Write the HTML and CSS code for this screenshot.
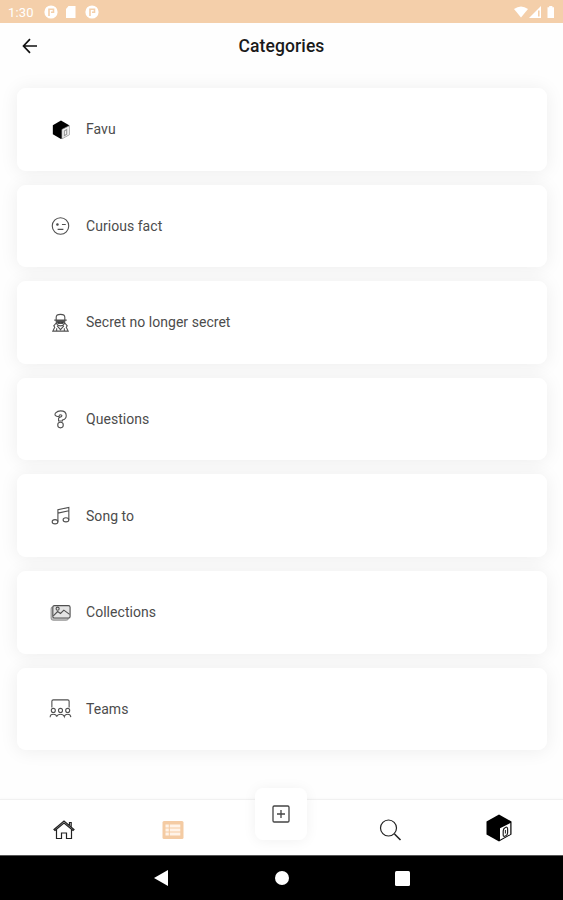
FILE: index.html
```html
<!DOCTYPE html>
<html lang="en">
<head>
<meta charset="utf-8">
<title>Categories</title>
<link rel="stylesheet" href="styles.css">
</head>
<body>
<div class="status">
  <span class="time">1:30</span>
  <svg class="status-left" width="56" height="14" viewBox="0 0 56 14">
    <g fill="#fff"><circle cx="7" cy="7" r="6.600"/><path d="M24.500 1h7v12H22V4z"/><circle cx="48" cy="7" r="6.600"/></g>
    <g fill="none" stroke="#f4cfaa" stroke-width="1.600"><path d="M5 11V4.200h4.500v3H7M46 11V4.200h4.500v3H48"/></g>
  </svg>
  <svg class="status-right" width="42" height="14" viewBox="0 0 42 14" fill="#fff">
    <path d="M0 4Q7-1.200 14 4L7 12.500z"/><path d="M15 13 27 1v12z"/><path d="M24 5.500h1.600v6H24z" fill="#f4cfaa"/><path d="M33.500 2.200h1.700V1h3.200v1.200H40V13h-6.500z"/>
  </svg>
</div>
<header class="header">
  <svg class="back" width="16" height="16" viewBox="0 0 16 16" fill="none" stroke="#111" stroke-width="1.700"><path d="M8 1.200 1.500 8 8 14.800M1.500 8H15"/></svg>
  <h1>Categories</h1>
</header>
<main class="list">
  <div class="card"><svg class="icon" viewBox="0 0 24 24"><path d="m12.500 2.500 8.500 5v10l-8.500 4.500-8.500-5v-9.500z" fill="#000" stroke="none"/><path d="m13.500 12 7.800-4v9.500l-7.800 4.300z" fill="#f4f4f4" stroke="#999" stroke-width=".7"/><path d="m16 13.500 2.500-1.500v5L16 18.500z" fill="none" stroke="#999"/></svg><span>Favu</span></div>
  <div class="card"><svg class="icon" viewBox="0 0 24 24"><circle cx="12" cy="12.500" r="8.600"/><path d="M13.500 11h4M9 16h6"/><circle cx="8.800" cy="11" r=".8" fill="#333"/></svg><span>Curious fact</span></div>
  <div class="card"><svg class="icon" viewBox="0 0 24 24"><path d="M7.500 9V6.500q0-3 4.500-3t4.500 3V9M5.500 9.500h13M7.500 10.500q0 5 4.500 5t4.500-5zM7.500 12.500l-2.500 3 1 1.500-2 4h16L18 17l1-1.500-2.500-3M8.500 15.500l3.500 4 3.500-4M8 18v2.500m8-2.500v2.500"/><path d="M8.500 11h3v2h-2zm4 0h3l-1 2h-2z" fill="#333"/></svg><span>Secret no longer secret</span></div>
  <div class="card"><svg class="icon" viewBox="0 0 24 24"><path d="M7 8q-1.500-1 0-3 2-2 5-2 6 0 6 5 0 3.500-4 4.500v1h-4V11q0-1 1.500-1.500 2-.5 2-1.500T12 7q-1.500 0-1.500 1.500-2 1-3.500-.5z"/><circle cx="12" cy="17.800" r="2.900"/></svg><span>Questions</span></div>
  <div class="card"><svg class="icon" viewBox="0 0 24 24"><ellipse cx="6.300" cy="18.500" rx="3" ry="2.200"/><ellipse cx="17.700" cy="16.500" rx="3" ry="2.200"/><path d="M9.300 18.500V6L20.700 3.500v13M9.300 9.500l11.400-2.500"/></svg><span>Song to</span></div>
  <div class="card"><svg class="icon" viewBox="0 0 24 24"><rect x="2.200" y="6" width="18" height="14" rx="2.500" fill="#ccc" stroke="#999"/><rect x="4" y="4.800" width="18" height="13" rx="1.700" fill="#e4e4e4"/><path d="m4.500 15.500 4.500-4.500 3 2 3.500-3.500 6 4.500"/><circle cx="9" cy="8" r="1.600"/></svg><span>Collections</span></div>
  <div class="card"><svg class="icon" viewBox="0 0 24 24"><path d="M3 11V4.500q0-1.500 1.500-1.500h15Q21 3 21 4.500V11"/><circle cx="4.500" cy="14" r="2.100"/><circle cx="12" cy="14" r="2.100"/><circle cx="19.500" cy="14" r="2.100"/><path d="M1.200 21q0-3 3.300-3t3.500 2.500q1-2.500 4-2.500t4 2.500q.5-2.500 3.500-2.500t3.300 3"/></svg><span>Teams</span></div>
</main>
<nav class="tabs">
  <div class="tab"><svg width="24" height="24" viewBox="0 0 24 24" fill="none" stroke="#222" stroke-width="1.200"><path d="M2 11.500 12 3l10 8.500-1 1-9-7.500-9 7.500zM4.500 11.500V20.500h5V15h5v5.500h5v-9M17.500 7V4.500h1.700V9"/></svg></div>
  <div class="tab"><svg width="24" height="24" viewBox="0 0 24 24"><rect x="1.500" y="3" width="21" height="18" rx="1.500" fill="#f4cba3"/><path d="M4.500 6.500h3.300v3H4.500zm0 4h3.300v3H4.500zm0 4h3.300v3H4.500zm4.300-8h10.500v3H8.800zm0 4h10.500v3H8.800zm0 4h10.500v3H8.800z" fill="#fff3e8"/></svg></div>
  <div class="tab"><div class="add"><svg width="24" height="24" viewBox="0 0 24 24" fill="none" stroke="#444" stroke-width="1.300"><rect x="4" y="4" width="16" height="16" rx="1.200"/><path d="M12 8v8m-4-4h8"/></svg></div></div>
  <div class="tab"><svg width="24" height="24" viewBox="0 0 24 24" fill="none" stroke="#222" stroke-width="1.200"><circle cx="10.500" cy="10" r="8"/><path d="m16.500 16 6 6" stroke-width="1.600"/></svg></div>
  <div class="tab"><svg class="cube" width="28" height="30" viewBox="0 0 28 30"><path d="m14 1.500 12.500 7v13L14 28.500 1.500 21.500V8.500z"/><path d="m15 15.300 10.300-5.300v11.200L15 26.800z" fill="#fff"/><path d="M18.200 18q0-2.500 2.200-3.500t2.200 1.500v4q0 2-2.200 3t-2.200-1z" fill="#fff" stroke="#222" stroke-width="1.200"/><path d="M20.400 17v3.500" stroke="#222"/></svg></div>
</nav>
<footer class="system">
  <div class="key"><svg width="14" height="16" viewBox="0 0 14 16"><path d="M0 8 14 0v16z" fill="#fff"/></svg></div>
  <div class="key"><span class="home"></span></div>
  <div class="key"><span class="recent"></span></div>
</footer>
</body>
</html>
```
FILE: styles.css
```css
* { box-sizing: border-box; }
body {
  margin: 0;
  width: 563px;
  height: 900px;
  display: flex;
  flex-direction: column;
  overflow: hidden;
  background: #fefefe;
  font-family: Roboto, sans-serif;
}
svg { display: block; flex: none; }
.status {
  height: 23px;
  flex: none;
  display: flex;
  align-items: center;
  padding: 1px 7px 0 8px;
  background: #f4cfaa;
  color: #fff;
}
.time { width: 36px; font-size: 13px; letter-spacing: .2px; }
.status-right { margin-left: auto; }
.header {
  height: 46px;
  flex: none;
  display: grid;
  grid-template-columns: 1fr auto 1fr;
  align-items: center;
  padding: 0 22px;
}
.header h1 {
  margin: 0;
  font-size: 17.500px;
  font-weight: 500;
  letter-spacing: .1px;
  color: #1a1a1a;
}
.list {
  flex: 1;
  display: flex;
  flex-direction: column;
  gap: 14px;
  padding: 19px 16px 0 17px;
  isolation: isolate;
}
.card {
  height: 82.600px;
  flex: none;
  display: flex;
  align-items: center;
  gap: 14px;
  padding-left: 32px;
  position: relative;
  border-radius: 9px;
  background: #fff;
  font-size: 14px;
  letter-spacing: .04px;
  color: #4c4c4c;
}
.card::before {
  content: "";
  position: absolute;
  inset: 0;
  z-index: -1;
  border-radius: inherit;
  box-shadow: 0 1px 18px 1px rgba(0, 0, 0, .062);
}
.icon {
  width: 23px;
  height: 23px;
  fill: none;
  stroke: #505050;
  stroke-width: 1.150;
}
.tabs {
  height: 56px;
  flex: none;
  display: grid;
  grid-template-columns: repeat(5, 1fr);
  align-items: center;
  padding: 5px 10px 0;
  background: #fff;
  border-top: 1px solid #f1f1f1;
  box-shadow: 0 -1px 2px rgba(0, 0, 0, .02);
}
.tab { display: flex; justify-content: center; }
.add {
  width: 52px;
  height: 52px;
  margin-top: -32px;
  display: flex;
  align-items: center;
  justify-content: center;
  border-radius: 8px;
  background: #fff;
  box-shadow: 0 1px 14px rgba(0, 0, 0, .06);
}
.cube { margin-top: -4px; }
.system {
  height: 45px;
  flex: none;
  display: flex;
  justify-content: center;
  background: #000;
  border-top: 1px solid #555;
}
.key { width: 120.500px; display: flex; align-items: center; justify-content: center; }
.home { width: 14px; height: 14px; border-radius: 50%; background: #fff; }
.recent { width: 15px; height: 15px; border-radius: 1.500px; background: #fff; }
```
